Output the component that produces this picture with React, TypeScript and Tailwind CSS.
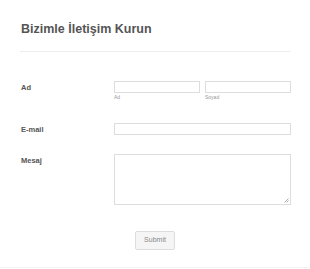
export default function App() {
  return (
    <div className="w-[310px] h-[269px] bg-white overflow-hidden font-['Liberation_Sans',Arial,sans-serif]">
      <div className="px-[20px] w-[311px] border-b border-[#f3f3f3] h-[268px]">
        <div className="pt-[22px] pb-[14px] border-b border-[#eeeeee] w-[271px]">
          <h1 className="text-[12.5px] leading-[15px] font-bold text-[#555555] pl-[1px]">
            Bizimle İletişim Kurun
          </h1>
        </div>

        <div className="flex mt-[29px]">
          <label className="w-[94px] pl-[1px] pt-[2px] text-[7.5px] leading-[9px] font-bold text-[#555555]">
            Ad
          </label>
          <div className="flex gap-[5px]">
            <div className="w-[86px]">
              <div className="h-[12px] border border-[#dddddd] bg-white"></div>
              <div className="text-[5px] leading-[7px] text-[#999999] mt-[1px]">Ad</div>
            </div>
            <div className="w-[86px]">
              <div className="h-[12px] border border-[#dddddd] bg-white"></div>
              <div className="text-[5px] leading-[7px] text-[#999999] mt-[1px]">Soyad</div>
            </div>
          </div>
        </div>

        <div className="flex mt-[22px]">
          <label className="w-[94px] pl-[1px] pt-[2px] text-[7.5px] leading-[9px] font-bold text-[#555555]">
            E-mail
          </label>
          <div className="w-[177px] h-[12px] border border-[#dddddd] bg-white"></div>
        </div>

        <div className="flex mt-[19px]">
          <label className="w-[94px] pl-[1px] pt-[2px] text-[7.5px] leading-[9px] font-bold text-[#555555]">
            Mesaj
          </label>
          <div className="relative w-[177px] h-[51px] border border-[#dddddd] bg-white">
            <svg className="absolute right-[1px] bottom-[1px]" width="5" height="5" viewBox="0 0 5 5">
              <path d="M4.5 0.5 L0.5 4.5 M4.5 2.5 L2.5 4.5" stroke="#999999" strokeWidth="0.8" />
            </svg>
          </div>
        </div>

        <div className="pl-[115px] mt-[26px]">
          <button className="w-[40px] h-[19px] border border-[#dddddd] rounded-[2px] bg-[#f5f5f5] text-[7px] text-[#888888] block">
            Submit
          </button>
        </div>
      </div>
    </div>
  );
}
